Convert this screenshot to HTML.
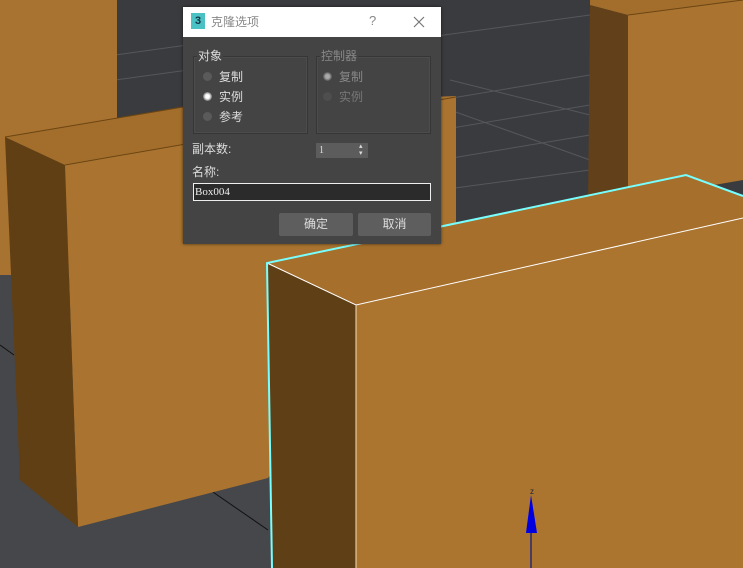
<!DOCTYPE html>
<html><head><meta charset="utf-8"><style>
body{margin:0;width:743px;height:568px;overflow:hidden;background:#3c3d41;font-family:"Liberation Sans","Noto Sans CJK SC",sans-serif;}
.dlg{position:absolute;left:183px;top:7px;width:258px;height:237px;background:#444;box-shadow:0 0 3px rgba(0,0,0,.6);}
.tb{position:absolute;left:0;top:0;width:258px;height:30px;background:#fff;}
.t{position:absolute;font-size:12px;color:#ddd;line-height:14px;white-space:nowrap}
.g{position:absolute;border:1px solid #363636;box-shadow:inset 0 0 0 1px #4c4c4c;}
.r{position:absolute;width:9px;height:9px;border-radius:50%;background:#5a5a5a;}
.btn{position:absolute;top:206px;height:23px;background:#5e5e5e;border-radius:2px;color:#ddd;font-size:12px;text-align:center;line-height:23px}
</style></head><body>
<svg width="743" height="568" style="position:absolute;left:0;top:0">
<rect width="743" height="568" fill="#3a3b3f"/>
<polygon points="0,270 743,225 743,568 0,568" fill="#45474b"/>
<g stroke="#55575c" stroke-width="1" fill="none">
<line x1="115" y1="55" x2="440" y2="10"/><line x1="115" y1="80" x2="590" y2="15"/>
<line x1="440" y1="100" x2="590" y2="75"/><line x1="440" y1="130" x2="590" y2="105"/>
<line x1="440" y1="160" x2="590" y2="135"/><line x1="440" y1="190" x2="590" y2="170"/>
<line x1="450" y1="80" x2="590" y2="115"/><line x1="450" y1="110" x2="590" y2="160"/>
</g>
<line x1="210" y1="490" x2="268" y2="530" stroke="#111"/>
<line x1="0" y1="345" x2="14" y2="355" stroke="#111"/>
<rect x="0" y="0" width="117" height="275" fill="#a87230"/>
<polygon points="5,137 117,118 183,107 456,96 456,230 268,478 78,527 65,165" fill="#aa7430"/>
<polygon points="5,137 183,107 441,94 441,100 65,165" fill="#a36e2c"/>
<polygon points="5,137 65,165 78,527 20,480" fill="#603f15"/>
<line x1="5" y1="137" x2="183" y2="107" stroke="#6b4512"/>
<line x1="65" y1="165" x2="456" y2="97" stroke="#6b4512"/>
<polygon points="590,5 628,15 628,200 588,210" fill="#62401a"/>
<polygon points="628,15 743,0 743,180 628,200" fill="#aa7430"/>
<polygon points="590,0 743,0 628,15 590,5" fill="#a36e2c"/>
<line x1="628" y1="15" x2="743" y2="0" stroke="#6b4512"/>
<polygon points="267,263 686,175 743,196 743,568 272,568" fill="#a66f2c"/>
<polygon points="356,305 743,218 743,568 356,568" fill="#ab7530"/>
<polygon points="267,263 356,305 356,568 272,568" fill="#5e3f16"/>
<polyline points="267,263 356,305 743,218" fill="none" stroke="#fff" stroke-width="1"/>
<line x1="356" y1="305" x2="356" y2="568" stroke="#f0e0c0" stroke-width="1"/>
<polyline points="272,568 267,263 686,175 743,196" fill="none" stroke="#7ff" stroke-width="2"/>
<line x1="531" y1="530" x2="531" y2="568" stroke="#2a2a70" stroke-width="1.5"/>
<polygon points="531,495 526,533 537,533" fill="#0000e0"/>
<text x="532" y="494" font-size="8" fill="#223" text-anchor="middle" font-family="Liberation Sans">z</text>
</svg>
<div class="dlg">
<div class="tb">
<div style="position:absolute;left:8px;top:6px;width:14px;height:16px;background:#4cc1c4;color:#134;font-size:11px;font-weight:bold;text-align:center;line-height:16px">3</div>
<div class="t" style="left:28px;top:8px;color:#888;font-size:12px">克隆选项</div>
<div class="t" style="left:186px;top:7px;color:#888;font-size:13px">?</div>
<svg style="position:absolute;left:230px;top:9px" width="12" height="12"><path d="M1 1L11 11M11 1L1 11" stroke="#777" stroke-width="1.2"/></svg>
</div>
<div class="g" style="left:10px;top:49px;width:113px;height:76px"></div>
<div class="g" style="left:133px;top:49px;width:113px;height:76px"></div>
<div class="t" style="left:14px;top:42px;background:#444;padding:0 1px">对象</div>
<div class="t" style="left:137px;top:42px;color:#888;background:#444;padding:0 1px">控制器</div>
<div class="r" style="left:20px;top:65px"></div><div class="t" style="left:36px;top:63px">复制</div>
<div class="r" style="left:20px;top:85px;background:radial-gradient(#fff 30%,#777 70%)"></div><div class="t" style="left:36px;top:83px">实例</div>
<div class="r" style="left:20px;top:105px"></div><div class="t" style="left:36px;top:103px">参考</div>
<div class="r" style="left:140px;top:65px;background:radial-gradient(#aaa 30%,#555 70%)"></div><div class="t" style="left:156px;top:63px;color:#888">复制</div>
<div class="r" style="left:140px;top:85px;background:#4e4e4e"></div><div class="t" style="left:156px;top:83px;color:#777">实例</div>
<div class="t" style="left:9px;top:135px">副本数:</div>
<div style="position:absolute;left:133px;top:136px;width:52px;height:15px;background:#5c5c5c;"></div>
<div class="t" style="left:136px;top:137px;font-size:10px;font-family:'Liberation Serif',serif">1</div>
<div class="t" style="left:176px;top:136px;font-size:7px;line-height:7px">▴<br>▾</div>
<div class="t" style="left:9px;top:158px">名称:</div>
<div style="position:absolute;left:10px;top:176px;width:236px;height:16px;border:1px solid #eee;background:#2b2b2b;"></div>
<div class="t" style="left:12px;top:178px;font-size:11px;color:#eee;font-family:'Liberation Serif',serif">Box004</div>
<div class="btn" style="left:96px;width:74px">确定</div>
<div class="btn" style="left:175px;width:73px">取消</div>
</div>
</body></html>
